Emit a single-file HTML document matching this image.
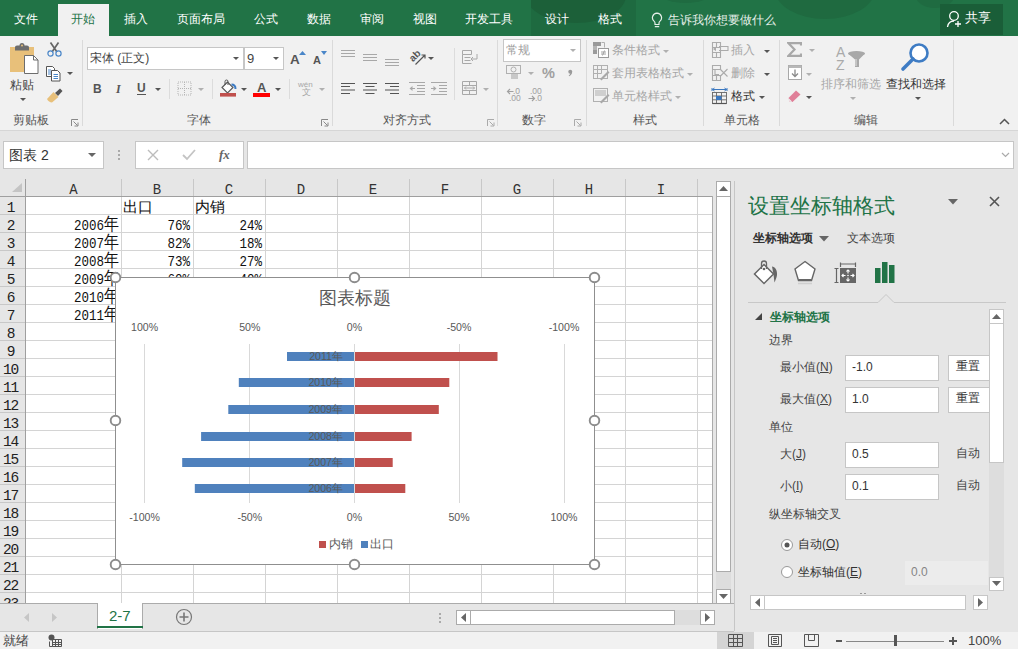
<!DOCTYPE html>
<html><head><meta charset="utf-8">
<style>
*{box-sizing:border-box}
body{margin:0;width:1018px;height:649px;position:relative;overflow:hidden;background:#e6e6e6;font-family:"Liberation Sans",sans-serif;color:#444}
.a{position:absolute}
.t{position:absolute;white-space:nowrap;line-height:1}
#tb{left:0;top:0;width:1018px;height:36px;background:#217346;overflow:hidden}
.tab{position:absolute;top:12px;font-size:12px;color:#fff;line-height:14px;white-space:nowrap}
#rb{left:0;top:36px;width:1018px;height:95px;background:#f1f1f1;border-bottom:1px solid #d6d6d6}
.gl{position:absolute;top:77px;font-size:12px;color:#555;line-height:14px;white-space:nowrap}
.dv{position:absolute;top:4px;width:1px;height:86px;background:#dadada}
.arr{position:absolute;width:0;height:0;border-left:3px solid transparent;border-right:3px solid transparent;border-top:3px solid #555}
.arrg{position:absolute;width:0;height:0;border-left:3px solid transparent;border-right:3px solid transparent;border-top:3px solid #b0b0b0}
.box{position:absolute;background:#fff;border:1px solid #c6c6c6}
.rt{font-size:12px;line-height:14px;color:#a6a6a6;position:absolute;white-space:nowrap}
#grid{left:0;top:179px;width:713px;height:425px;background:#fff;overflow:hidden}
.ch{position:absolute;top:0;height:18px;font-family:"Liberation Mono",monospace;font-size:14px;color:#333;text-align:center;line-height:22px}
.rh{position:absolute;left:0;width:23px;height:18px;font-family:"Liberation Mono",monospace;font-size:14.5px;letter-spacing:-1.3px;color:#222;text-align:center;line-height:22px;text-indent:-2px}
.cell{position:absolute;height:18px;font-family:"Liberation Mono",monospace;font-size:15px;color:#111;line-height:24px;white-space:nowrap}
.d{letter-spacing:0}
.sr{transform:scaleX(.833);transform-origin:100% 50%}
.lab{font-size:10.6px;color:#595959}
</style></head><body>

<!-- title/tabs bar -->
<div id="tb" class="a">
  <div class="a" style="left:775px;top:-40px;width:100px;height:59px;border-radius:50%;background:#1f6a40"></div>
  <div class="a" style="left:658px;top:-20px;width:55px;height:23px;border-radius:50%;background:#1f6b41"></div>
  <div class="a" style="left:915px;top:-20px;width:40px;height:28px;border-radius:50%;background:#1f6b41"></div>
  <div class="a" style="left:531px;top:0;width:105px;height:36px;background:#1e6a40;overflow:hidden"><div class="a" style="left:-5px;top:-32px;width:100px;height:55px;border-radius:50%;background:#1c6039"></div></div>
  <div class="a" style="left:58px;top:4px;width:51px;height:32px;background:#f1f1f1"></div>
  <div class="tab" style="left:14px">文件</div>
  <div class="tab" style="left:71px;color:#217346">开始</div>
  <div class="tab" style="left:124px">插入</div>
  <div class="tab" style="left:177px">页面布局</div>
  <div class="tab" style="left:254px">公式</div>
  <div class="tab" style="left:307px">数据</div>
  <div class="tab" style="left:360px">审阅</div>
  <div class="tab" style="left:413px">视图</div>
  <div class="tab" style="left:465px">开发工具</div>
  <div class="tab" style="left:545px">设计</div>
  <div class="tab" style="left:598px">格式</div>
  <svg class="a" style="left:651px;top:12px" width="12" height="16" viewBox="0 0 12 16"><path d="M6 1.2a4.6 4.6 0 0 0-2.8 8.2c.6.5.8 1.1.8 1.8v1.3h4v-1.3c0-.7.2-1.3.8-1.8A4.6 4.6 0 0 0 6 1.2z" fill="none" stroke="#e6efe9" stroke-width="1.2"/><path d="M3.8 14.6h4.4" stroke="#e6efe9" stroke-width="1.3"/></svg>
  <div class="tab" style="left:668px;top:13px;color:#e6efe9">告诉我你想要做什么</div>
  <div class="a" style="left:940px;top:4px;width:63px;height:31px;background:#1a5e38"></div>
  <svg class="a" style="left:946px;top:10px" width="17" height="18" viewBox="0 0 17 18"><circle cx="8" cy="6" r="4.3" fill="none" stroke="#fff" stroke-width="1.3"/><path d="M1.5 17c.5-3.5 3-6 6.5-6" fill="none" stroke="#fff" stroke-width="1.3"/><path d="M12 11v6M9 14h6" stroke="#fff" stroke-width="1.3"/></svg>
  <div class="tab" style="left:965px;top:11px;font-size:13px">共享</div>
</div>

<!-- ribbon -->
<div id="rb" class="a">
</div>
<!-- clipboard group -->
<svg class="a" style="left:9px;top:42px" width="31" height="33" viewBox="0 0 31 33">
 <rect x="1" y="5" width="24" height="25" fill="#e8c07a"/>
 <path d="M6 5.5c0-1.2.8-2 2-2h2.5a2.5 2.5 0 0 1 5 0H18c1.2 0 2 .8 2 2V8.5H6z" fill="#6d6d6d"/><circle cx="13" cy="3.5" r="1" fill="#e8c07a"/>
 <path d="M15.5 13.5h9l4.5 4.5v13.5h-13.5z" fill="#fff" stroke="#6d6d6d" stroke-width="1"/>
 <path d="M24.5 13.5v4.5h4.5" fill="none" stroke="#6d6d6d" stroke-width="1"/>
</svg>
<div class="t" style="left:10px;top:79px;font-size:12px;color:#444">粘贴</div>
<div class="arr" style="left:20px;top:98px"></div>
<svg class="a" style="left:46px;top:41px" width="17" height="17" viewBox="0 0 17 17">
 <path d="M4.5 1.5l6.5 9.5M12.5 1.5L6 11" stroke="#666" stroke-width="1.7"/>
 <circle cx="4.5" cy="12.5" r="2.6" fill="none" stroke="#4a86c8" stroke-width="1.2"/>
 <circle cx="12.5" cy="12.5" r="2.6" fill="none" stroke="#4a86c8" stroke-width="1.2"/>
</svg>
<svg class="a" style="left:45px;top:65px" width="17" height="17" viewBox="0 0 17 17">
 <path d="M1.5 1.5h6l2 2v8h-8z" fill="#fff" stroke="#555"/>
 <path d="M6.5 5.5h6l2.5 2.5v8h-8.5z" fill="#fff" stroke="#555"/>
 <path d="M3 5h3M3 7h3M3 9h3" stroke="#4a86c8"/>
 <path d="M8.5 9.5h4.5M8.5 11.5h4.5M8.5 13.5h4.5" stroke="#4a86c8"/>
</svg>
<div class="arr" style="left:67px;top:72px"></div>
<svg class="a" style="left:46px;top:88px" width="17" height="15" viewBox="0 0 17 15">
 <path d="M9 5l5-4.5 2.5 2.5-4.5 5z" fill="#555"/>
 <path d="M1 11l6.5-7 5 5-6.5 5.5c-2 0-4-1.5-5-3.5z" fill="#e8c07a"/>
</svg>
<div class="t" style="left:13px;top:114px;font-size:12px;color:#555">剪贴板</div>
<svg class="a" style="left:71px;top:119px" width="8" height="8" viewBox="0 0 8 8"><path d="M.5 7V.5H7" fill="none" stroke="#888"/><path d="M2.5 2.5l4 4M7 3.5V7H3.5" fill="none" stroke="#888"/></svg>
<div class="dv" style="left:82px;top:40px"></div>

<!-- font group -->
<div class="box" style="left:87px;top:47px;width:157px;height:23px"></div>
<div class="t" style="left:90px;top:52px;font-size:12px;color:#444">宋体 (正文)</div>
<div class="arr" style="left:233px;top:57px;border-top-color:#555"></div>
<div class="box" style="left:244px;top:47px;width:40px;height:23px"></div>
<div class="t" style="left:247px;top:52px;font-size:13px;color:#444">9</div>
<div class="arr" style="left:273px;top:57px"></div>
<div class="t" style="left:290px;top:53px;font-size:13.5px;font-weight:bold;color:#555">A</div>
<svg class="a" style="left:299px;top:51px" width="7" height="4"><path d="M0 4L3.5 0 7 4z" fill="#4a86c8"/></svg>
<div class="t" style="left:313px;top:55px;font-size:11px;font-weight:bold;color:#555">A</div>
<svg class="a" style="left:321px;top:51px" width="6" height="4"><path d="M0 0L3 4 6 0z" fill="#4a86c8"/></svg>
<div class="t" style="left:93px;top:83px;font-size:12px;font-weight:bold;color:#555">B</div>
<div class="t" style="left:116px;top:83px;font-size:12px;font-style:italic;font-family:'Liberation Serif',serif;font-weight:bold;color:#555">I</div>
<div class="t" style="left:137px;top:82px;font-size:12px;font-weight:bold;color:#555">U</div>
<div class="a" style="left:137px;top:94px;width:9px;height:1px;background:#555"></div>
<div class="arr" style="left:155px;top:88px"></div>
<div class="a" style="left:169px;top:79px;width:1px;height:20px;background:#dcdcdc"></div>
<svg class="a" style="left:177px;top:81px" width="15" height="15" viewBox="0 0 15 15">
 <path d="M1 1h13v13H1zM7.5 1v13M1 7.5h13" fill="none" stroke="#b5b5b5" stroke-dasharray="1 1"/>
</svg>
<div class="arrg" style="left:198px;top:88px"></div>
<div class="a" style="left:212px;top:79px;width:1px;height:20px;background:#dcdcdc"></div>
<svg class="a" style="left:219px;top:79px" width="18" height="18" viewBox="0 0 18 18">
 <path d="M3 8.5l5.5-5.5 5.5 5.5-5.5 5.5z" fill="#fff" stroke="#555" stroke-width="1.1"/>
 <path d="M6 6V2.5a1.5 1.5 0 0 1 3 0V6" fill="none" stroke="#555" stroke-width="1"/>
 <path d="M12.5 5.5c2.5 0 4 1.5 4 4.5" fill="none" stroke="#3e7cc4" stroke-width="2"/>
 <rect x="1" y="14" width="16" height="3.6" fill="#c0504d"/>
</svg>
<div class="arr" style="left:241px;top:88px"></div>
<div class="t" style="left:257px;top:81px;font-size:13px;font-weight:bold;color:#555">A</div>
<div class="a" style="left:253px;top:93px;width:17px;height:4px;background:#f00"></div>
<div class="arr" style="left:275px;top:88px"></div>
<div class="a" style="left:289px;top:79px;width:1px;height:20px;background:#dcdcdc"></div>
<div class="t" style="left:298px;top:81px;font-size:8px;color:#a8a8a8">wén</div>
<div class="t" style="left:302px;top:88px;font-size:9px;color:#a8a8a8">文</div>
<div class="arrg" style="left:319px;top:88px"></div>
<div class="t" style="left:187px;top:114px;font-size:12px;color:#555">字体</div>
<svg class="a" style="left:321px;top:119px" width="8" height="8" viewBox="0 0 8 8"><path d="M.5 7V.5H7" fill="none" stroke="#888"/><path d="M2.5 2.5l4 4M7 3.5V7H3.5" fill="none" stroke="#888"/></svg>
<div class="dv" style="left:332px;top:40px"></div>

<!-- alignment group -->
<svg class="a" style="left:340px;top:48px" width="62" height="20">
 <g stroke="#a8a8a8"><path d="M1 2.5h14M1 5.5h14M1 8.5h14"/><path d="M23 6.5h14M23 9.5h14M23 12.5h14"/><path d="M45 11.5h14M45 14.5h14M45 17.5h14"/></g>
</svg>
<svg class="a" style="left:407px;top:48px" width="20" height="18" viewBox="0 0 20 18">
 <text x="8" y="11" text-anchor="middle" font-size="10" font-family="Liberation Sans" font-weight="bold" fill="#555" transform="rotate(-45 8 8)">ab</text>
 <path d="M8.5 16.5L18 7M14.5 7H18V10.5" fill="none" stroke="#555" stroke-width="1.2"/>
</svg>
<div class="arr" style="left:428px;top:57px"></div>
<svg class="a" style="left:340px;top:82px" width="108" height="14">
 <g stroke="#555" stroke-width="1.2"><path d="M1 1.5h14M1 4.5h9M1 8h14M1 11.5h9"/><path d="M23 1.5h14M25.5 4.5h9M23 8h14M25.5 11.5h9"/><path d="M45 1.5h14M50 4.5h9M45 8h14M50 11.5h9"/></g>
 <g stroke="#a8a8a8" stroke-width="1.1"><path d="M69 .5h16M77 3.5h8M77 6.5h8M77 9.5h8M69 12.5h16M70 6.5h5"/><path d="M91 .5h16M99 3.5h8M99 6.5h8M99 9.5h8M91 12.5h16M91 6.5h5"/></g><path d="M69.5 6.5l3-2.5v5z" fill="#a8a8a8"/><path d="M96.5 6.5l-3-2.5v5z" fill="#a8a8a8"/>
</svg>
<div class="a" style="left:454px;top:48px;width:1px;height:52px;background:#dcdcdc"></div>
<svg class="a" style="left:461px;top:49px" width="18" height="16" viewBox="0 0 18 16">
 <g fill="none" stroke="#a8a8a8"><path d="M1.5 1.5h9v4h-9zM1.5 5.5v9h9M3.5 8.5h6M3.5 11.5h6"/><path d="M16 5v5h-6M12 8l-2 2 2 2"/></g>
</svg>
<svg class="a" style="left:461px;top:80px" width="17" height="16" viewBox="0 0 17 16">
 <g fill="none" stroke="#a8a8a8"><path d="M1.5 1.5h14v13h-14zM1.5 5.5h14M1.5 10.5h14M8.5 1.5v4M8.5 10.5v4"/><path d="M3.5 8h10M5 6.5L3.5 8 5 9.5M12 6.5L13.5 8 12 9.5"/></g>
</svg>
<div class="arrg" style="left:483px;top:88px"></div>
<div class="t" style="left:383px;top:114px;font-size:12px;color:#555">对齐方式</div>
<svg class="a" style="left:487px;top:119px" width="8" height="8" viewBox="0 0 8 8"><path d="M.5 7V.5H7" fill="none" stroke="#aaa"/><path d="M2.5 2.5l4 4M7 3.5V7H3.5" fill="none" stroke="#aaa"/></svg>
<div class="dv" style="left:497px;top:40px"></div>

<!-- number group -->
<div class="box" style="left:503px;top:39px;width:78px;height:23px"></div>
<div class="t" style="left:506px;top:44px;font-size:12px;color:#a0a0a0">常规</div>
<div class="arrg" style="left:570px;top:49px"></div>
<svg class="a" style="left:505px;top:64px" width="18" height="16" viewBox="0 0 18 16">
 <g fill="none" stroke="#b0b0b0"><rect x="1.5" y="1.5" width="14" height="8"/><circle cx="8.5" cy="5.5" r="2.5"/></g><path d="M6 10h7v5H6z" fill="#c8c8c8"/>
</svg>
<div class="arrg" style="left:528px;top:72px"></div>
<div class="t" style="left:542px;top:66px;font-size:14.5px;font-weight:bold;color:#a0a0a0">%</div>
<svg class="a" style="left:567px;top:69px" width="6" height="8" viewBox="0 0 7 9"><circle cx="3.8" cy="3" r="2.3" fill="#999"/><path d="M6 3c0 2.5-1.5 4.2-3.5 5.2L2 7.5c1.3-.8 2-2 2-3.5z" fill="#999"/></svg>
<div class="t" style="left:513px;top:88px;font-size:8.5px;color:#a0a0a0;line-height:7px">.0</div>
<div class="t" style="left:509px;top:95px;font-size:8.5px;color:#a0a0a0;line-height:7px">.00</div>
<div class="t" style="left:530px;top:88px;font-size:8.5px;color:#a0a0a0;line-height:7px">.00</div>
<div class="t" style="left:535px;top:95px;font-size:8.5px;color:#a0a0a0;line-height:7px">.0</div>
<svg class="a" style="left:506px;top:88px" width="8" height="7"><path d="M7.5 3.5H1.5M4 1L1.5 3.5 4 6" fill="none" stroke="#a0a0a0" stroke-width="1.2"/></svg>
<svg class="a" style="left:528px;top:95px" width="8" height="7"><path d="M.5 3.5h6M4 1l2.5 2.5L4 6" fill="none" stroke="#a0a0a0" stroke-width="1.2"/></svg>

<div class="t" style="left:522px;top:114px;font-size:12px;color:#555">数字</div>
<svg class="a" style="left:574px;top:119px" width="8" height="8" viewBox="0 0 8 8"><path d="M.5 7V.5H7" fill="none" stroke="#aaa"/><path d="M2.5 2.5l4 4M7 3.5V7H3.5" fill="none" stroke="#aaa"/></svg>
<div class="dv" style="left:586px;top:40px"></div>

<!-- styles group -->
<svg class="a" style="left:592px;top:41px" width="18" height="17" viewBox="0 0 18 17">
 <rect x="1" y="1" width="8" height="4" fill="#9a9a9a"/><rect x="1" y="5" width="4" height="4" fill="#b5b5b5"/><rect x="1" y="9" width="4" height="4" fill="#9a9a9a"/>
 <path d="M9.5 1.5h3v5" fill="none" stroke="#b0b0b0"/>
 <rect x="6.5" y="7.5" width="10" height="9" fill="#fff" stroke="#9a9a9a"/><path d="M9 11h5M9 13h5M12.5 9.5l-2 5" stroke="#9a9a9a" stroke-width=".9"/>
</svg>
<div class="t" style="left:612px;top:44px;font-size:12px;color:#a6a6a6">条件格式</div>
<div class="arrg" style="left:663px;top:50px"></div>
<svg class="a" style="left:592px;top:64px" width="18" height="17" viewBox="0 0 18 17">
 <g fill="none" stroke="#b0b0b0"><rect x="1.5" y="1.5" width="14" height="13"/><path d="M1.5 5.5h14M1.5 9.5h8M5.5 1.5v13M9.5 1.5v8"/></g><path d="M8 15l8-8 1.5 1.5-8 8z" fill="#a8a8a8"/>
</svg>
<div class="t" style="left:612px;top:67px;font-size:12px;color:#a6a6a6">套用表格格式</div>
<div class="arrg" style="left:687px;top:73px"></div>
<svg class="a" style="left:592px;top:87px" width="18" height="17" viewBox="0 0 18 17">
 <g fill="none" stroke="#b0b0b0"><rect x="1.5" y="1.5" width="14" height="13"/></g><rect x="3" y="3" width="11" height="6" fill="#cfcfcf"/><path d="M8 15l8-8 1.5 1.5-8 8z" fill="#a8a8a8"/>
</svg>
<div class="t" style="left:612px;top:90px;font-size:12px;color:#a6a6a6">单元格样式</div>
<div class="arrg" style="left:675px;top:96px"></div>
<div class="t" style="left:633px;top:114px;font-size:12px;color:#555">样式</div>
<div class="dv" style="left:703px;top:40px"></div>

<!-- cells group -->
<svg class="a" style="left:711px;top:41px" width="18" height="18" viewBox="0 0 18 18">
 <g fill="none" stroke="#ababab" stroke-width="1.1"><path d="M1.5 1.5h8v15h-8zM1.5 6.5h8M1.5 11.5h8M5.5 11.5v5M5.5 1.5v5"/><path d="M8 5.5h9v4H8"/></g>
 <path d="M2 8l3-2.2v4.4z" fill="#ababab"/>
</svg>
<div class="t" style="left:731px;top:44px;font-size:12px;color:#a6a6a6">插入</div>
<div class="arr" style="left:764px;top:50px"></div>
<svg class="a" style="left:711px;top:64px" width="18" height="18" viewBox="0 0 18 18">
 <g fill="none" stroke="#ababab" stroke-width="1.1"><path d="M1.5 1.5h8v4h-8zM1.5 5.5v11h8v-5h-8M5.5 11.5v5M4 5.5v5h4"/><path d="M9 5l7.5 7.5M16.5 5L9 12.5"/></g>
</svg>
<div class="t" style="left:731px;top:67px;font-size:12px;color:#a6a6a6">删除</div>
<div class="arr" style="left:764px;top:73px"></div>
<svg class="a" style="left:711px;top:87px" width="18" height="18" viewBox="0 0 18 18">
 <path d="M1.5 2.5h14M1 1v3M16 1v3M3.5 1L1.5 2.5 3.5 4M13.5 1l2 1.5-2 1.5" fill="none" stroke="#3b78c0" stroke-width="1"/>
 <g fill="none" stroke="#666" stroke-width=".9"><rect x="1.5" y="5.5" width="14" height="11"/><path d="M1.5 9h14M1.5 12.8h14M5.5 5.5v11M10.5 5.5v11"/></g>
 <rect x="5" y="9" width="5.5" height="4" fill="#3b78c0"/>
 <path d="M1.5 16.5h14" stroke="#555" stroke-width="1.2"/>
</svg>
<div class="t" style="left:731px;top:90px;font-size:12px;color:#333">格式</div>
<div class="arr" style="left:759px;top:96px"></div>
<div class="t" style="left:724px;top:114px;font-size:12px;color:#555">单元格</div>
<div class="dv" style="left:779px;top:40px"></div>

<!-- editing group -->
<svg class="a" style="left:787px;top:42px" width="15" height="15" viewBox="0 0 15 15"><path d="M14 3.5V1.2H1.5l6 6.3-6 6.3H14v-2.3" fill="none" stroke="#a8a8a8" stroke-width="2.2" stroke-linejoin="miter"/></svg>
<div class="arrg" style="left:809px;top:49px"></div>
<svg class="a" style="left:787px;top:64px" width="16" height="17" viewBox="0 0 16 17">
 <rect x="1.5" y="1.5" width="13" height="14" fill="#fff" stroke="#a8a8a8"/><rect x="1.5" y="1.5" width="13" height="2.5" fill="#b8b8b8"/>
 <path d="M8 5.5v7M5 9.5l3 3 3-3" fill="none" stroke="#8a8a8a" stroke-width="1.3"/>
</svg>
<div class="arrg" style="left:806px;top:73px"></div>
<svg class="a" style="left:787px;top:89px" width="15" height="13" viewBox="0 0 15 13">
 <path d="M1 9.5L9 1.5l4.5 4-8 7.5H3z" fill="#e07f98"/><path d="M1 9.5l3.5 3.5" stroke="#f0f0f0" stroke-width="1.2"/>
</svg>
<div class="arr" style="left:806px;top:96px"></div>
<div class="t" style="left:836px;top:45px;font-size:14px;color:#aaa">A</div>
<div class="t" style="left:836px;top:58px;font-size:14px;color:#aaa">Z</div>
<svg class="a" style="left:848px;top:51px" width="18" height="16" viewBox="0 0 18 16"><ellipse cx="8.5" cy="2.5" rx="8.5" ry="2.5" fill="#a8a8a8"/><path d="M0 2.5h17l-6 6v7.5h-4V8.5z" fill="#a8a8a8"/><path d="M8 8v7" stroke="#f1f1f1" stroke-width=".8"/></svg>
<div class="t" style="left:821px;top:78px;font-size:12px;color:#a6a6a6">排序和筛选</div>
<div class="arrg" style="left:850px;top:97px"></div>
<svg class="a" style="left:900px;top:42px" width="31" height="31" viewBox="0 0 31 31">
 <circle cx="19" cy="11" r="8.5" fill="#fff" stroke="#3e7cc4" stroke-width="2.6"/>
 <path d="M13 17L3 27" stroke="#3e7cc4" stroke-width="3.6" stroke-linecap="round"/>
</svg>
<div class="t" style="left:886px;top:78px;font-size:12px;color:#333">查找和选择</div>
<div class="arr" style="left:915px;top:97px"></div>
<div class="t" style="left:854px;top:114px;font-size:12px;color:#555">编辑</div>
<div class="dv" style="left:953px;top:40px"></div>
<svg class="a" style="left:999px;top:118px" width="11" height="7" viewBox="0 0 11 7"><path d="M1 6l4.5-4.5L10 6" fill="none" stroke="#555" stroke-width="1.5"/></svg>


<!-- formula bar area -->
<div class="box" style="left:3px;top:141px;width:101px;height:28px;border-color:#c6c6c6"></div>
<div class="t" style="left:9px;top:148px;font-size:14px;color:#333">图表 2</div>
<div class="arr" style="left:88px;top:153px;border-width:4px 4px 0 4px;border-top-color:#666"></div>
<div class="a" style="left:118px;top:150px;width:2px;height:2px;background:#aaa"></div>
<div class="a" style="left:118px;top:154px;width:2px;height:2px;background:#aaa"></div>
<div class="a" style="left:118px;top:158px;width:2px;height:2px;background:#aaa"></div>
<div class="box" style="left:135px;top:141px;width:109px;height:28px"></div>
<svg class="a" style="left:147px;top:149px" width="12" height="12" viewBox="0 0 12 12"><path d="M1 1l10 10M11 1L1 11" stroke="#bcbcbc" stroke-width="1.4"/></svg>
<svg class="a" style="left:182px;top:149px" width="14" height="12" viewBox="0 0 14 12"><path d="M1 6l4 4 8-9" fill="none" stroke="#c4c4c4" stroke-width="1.8"/></svg>
<div class="t" style="left:219px;top:148px;font-family:'Liberation Serif',serif;font-style:italic;font-weight:bold;font-size:13px;color:#666">fx</div>
<div class="box" style="left:247px;top:141px;width:767px;height:28px"></div>
<svg class="a" style="left:1001px;top:152px" width="9" height="6" viewBox="0 0 9 6"><path d="M1 1l3.5 3.5L8 1" fill="none" stroke="#aaa" stroke-width="1.2"/></svg>

<!-- grid -->
<div id="grid" class="a">
<svg class="a" style="left:0;top:0" width="713" height="425">
<rect x="0" y="0" width="713" height="18" fill="#e6e6e6"/>
<rect x="0" y="0" width="26" height="425" fill="#e6e6e6"/>
<line x1="26" x2="713" y1="35.5" y2="35.5" stroke="#d4d4d4"/>
<line x1="0" x2="26" y1="35.5" y2="35.5" stroke="#c8c8c8"/>
<line x1="26" x2="713" y1="53.5" y2="53.5" stroke="#d4d4d4"/>
<line x1="0" x2="26" y1="53.5" y2="53.5" stroke="#c8c8c8"/>
<line x1="26" x2="713" y1="71.5" y2="71.5" stroke="#d4d4d4"/>
<line x1="0" x2="26" y1="71.5" y2="71.5" stroke="#c8c8c8"/>
<line x1="26" x2="713" y1="89.5" y2="89.5" stroke="#d4d4d4"/>
<line x1="0" x2="26" y1="89.5" y2="89.5" stroke="#c8c8c8"/>
<line x1="26" x2="713" y1="107.5" y2="107.5" stroke="#d4d4d4"/>
<line x1="0" x2="26" y1="107.5" y2="107.5" stroke="#c8c8c8"/>
<line x1="26" x2="713" y1="125.5" y2="125.5" stroke="#d4d4d4"/>
<line x1="0" x2="26" y1="125.5" y2="125.5" stroke="#c8c8c8"/>
<line x1="26" x2="713" y1="143.5" y2="143.5" stroke="#d4d4d4"/>
<line x1="0" x2="26" y1="143.5" y2="143.5" stroke="#c8c8c8"/>
<line x1="26" x2="713" y1="161.5" y2="161.5" stroke="#d4d4d4"/>
<line x1="0" x2="26" y1="161.5" y2="161.5" stroke="#c8c8c8"/>
<line x1="26" x2="713" y1="179.5" y2="179.5" stroke="#d4d4d4"/>
<line x1="0" x2="26" y1="179.5" y2="179.5" stroke="#c8c8c8"/>
<line x1="26" x2="713" y1="197.5" y2="197.5" stroke="#d4d4d4"/>
<line x1="0" x2="26" y1="197.5" y2="197.5" stroke="#c8c8c8"/>
<line x1="26" x2="713" y1="215.5" y2="215.5" stroke="#d4d4d4"/>
<line x1="0" x2="26" y1="215.5" y2="215.5" stroke="#c8c8c8"/>
<line x1="26" x2="713" y1="233.5" y2="233.5" stroke="#d4d4d4"/>
<line x1="0" x2="26" y1="233.5" y2="233.5" stroke="#c8c8c8"/>
<line x1="26" x2="713" y1="251.5" y2="251.5" stroke="#d4d4d4"/>
<line x1="0" x2="26" y1="251.5" y2="251.5" stroke="#c8c8c8"/>
<line x1="26" x2="713" y1="269.5" y2="269.5" stroke="#d4d4d4"/>
<line x1="0" x2="26" y1="269.5" y2="269.5" stroke="#c8c8c8"/>
<line x1="26" x2="713" y1="287.5" y2="287.5" stroke="#d4d4d4"/>
<line x1="0" x2="26" y1="287.5" y2="287.5" stroke="#c8c8c8"/>
<line x1="26" x2="713" y1="305.5" y2="305.5" stroke="#d4d4d4"/>
<line x1="0" x2="26" y1="305.5" y2="305.5" stroke="#c8c8c8"/>
<line x1="26" x2="713" y1="323.5" y2="323.5" stroke="#d4d4d4"/>
<line x1="0" x2="26" y1="323.5" y2="323.5" stroke="#c8c8c8"/>
<line x1="26" x2="713" y1="341.5" y2="341.5" stroke="#d4d4d4"/>
<line x1="0" x2="26" y1="341.5" y2="341.5" stroke="#c8c8c8"/>
<line x1="26" x2="713" y1="359.5" y2="359.5" stroke="#d4d4d4"/>
<line x1="0" x2="26" y1="359.5" y2="359.5" stroke="#c8c8c8"/>
<line x1="26" x2="713" y1="377.5" y2="377.5" stroke="#d4d4d4"/>
<line x1="0" x2="26" y1="377.5" y2="377.5" stroke="#c8c8c8"/>
<line x1="26" x2="713" y1="395.5" y2="395.5" stroke="#d4d4d4"/>
<line x1="0" x2="26" y1="395.5" y2="395.5" stroke="#c8c8c8"/>
<line x1="26" x2="713" y1="413.5" y2="413.5" stroke="#d4d4d4"/>
<line x1="0" x2="26" y1="413.5" y2="413.5" stroke="#c8c8c8"/>
<line x1="26" x2="713" y1="431.5" y2="431.5" stroke="#d4d4d4"/>
<line x1="0" x2="26" y1="431.5" y2="431.5" stroke="#c8c8c8"/>
<line x1="26" x2="713" y1="449.5" y2="449.5" stroke="#d4d4d4"/>
<line x1="0" x2="26" y1="449.5" y2="449.5" stroke="#c8c8c8"/>
<line x1="121.5" x2="121.5" y1="18" y2="425" stroke="#d4d4d4"/>
<line x1="121.5" x2="121.5" y1="0" y2="18" stroke="#c8c8c8"/>
<line x1="193.5" x2="193.5" y1="18" y2="425" stroke="#d4d4d4"/>
<line x1="193.5" x2="193.5" y1="0" y2="18" stroke="#c8c8c8"/>
<line x1="265.5" x2="265.5" y1="18" y2="425" stroke="#d4d4d4"/>
<line x1="265.5" x2="265.5" y1="0" y2="18" stroke="#c8c8c8"/>
<line x1="337.5" x2="337.5" y1="18" y2="425" stroke="#d4d4d4"/>
<line x1="337.5" x2="337.5" y1="0" y2="18" stroke="#c8c8c8"/>
<line x1="409.5" x2="409.5" y1="18" y2="425" stroke="#d4d4d4"/>
<line x1="409.5" x2="409.5" y1="0" y2="18" stroke="#c8c8c8"/>
<line x1="481.5" x2="481.5" y1="18" y2="425" stroke="#d4d4d4"/>
<line x1="481.5" x2="481.5" y1="0" y2="18" stroke="#c8c8c8"/>
<line x1="553.5" x2="553.5" y1="18" y2="425" stroke="#d4d4d4"/>
<line x1="553.5" x2="553.5" y1="0" y2="18" stroke="#c8c8c8"/>
<line x1="625.5" x2="625.5" y1="18" y2="425" stroke="#d4d4d4"/>
<line x1="625.5" x2="625.5" y1="0" y2="18" stroke="#c8c8c8"/>
<line x1="697.5" x2="697.5" y1="18" y2="425" stroke="#d4d4d4"/>
<line x1="697.5" x2="697.5" y1="0" y2="18" stroke="#c8c8c8"/>
<line x1="769.5" x2="769.5" y1="18" y2="425" stroke="#d4d4d4"/>
<line x1="769.5" x2="769.5" y1="0" y2="18" stroke="#c8c8c8"/>
<line x1="0" x2="713" y1="17.5" y2="17.5" stroke="#9f9f9f"/>
<line x1="25.5" x2="25.5" y1="0" y2="425" stroke="#9f9f9f"/>
<path d="M12 13L22 4V13Z" fill="#c4c4c4"/>
<path d="M712.5 17V424.5H0" fill="none" stroke="#ababab"/>
</svg>
<div class="ch" style="left:26px;width:95px">A</div>
<div class="ch" style="left:121px;width:72px">B</div>
<div class="ch" style="left:193px;width:72px">C</div>
<div class="ch" style="left:265px;width:72px">D</div>
<div class="ch" style="left:337px;width:72px">E</div>
<div class="ch" style="left:409px;width:72px">F</div>
<div class="ch" style="left:481px;width:72px">G</div>
<div class="ch" style="left:553px;width:72px">H</div>
<div class="ch" style="left:625px;width:72px">I</div>
<div class="ch" style="left:697px;width:72px">J</div>
<div class="rh" style="top:18px">1</div>
<div class="rh" style="top:36px">2</div>
<div class="rh" style="top:54px">3</div>
<div class="rh" style="top:72px">4</div>
<div class="rh" style="top:90px">5</div>
<div class="rh" style="top:108px">6</div>
<div class="rh" style="top:126px">7</div>
<div class="rh" style="top:144px">8</div>
<div class="rh" style="top:162px">9</div>
<div class="rh" style="top:180px">10</div>
<div class="rh" style="top:198px">11</div>
<div class="rh" style="top:216px">12</div>
<div class="rh" style="top:234px">13</div>
<div class="rh" style="top:252px">14</div>
<div class="rh" style="top:270px">15</div>
<div class="rh" style="top:288px">16</div>
<div class="rh" style="top:306px">17</div>
<div class="rh" style="top:324px">18</div>
<div class="rh" style="top:342px">19</div>
<div class="rh" style="top:360px">20</div>
<div class="rh" style="top:378px">21</div>
<div class="rh" style="top:396px">22</div>
<div class="rh" style="top:414px">23</div>
</div>
<div class="cell" style="left:123px;top:197px">出口</div>
<div class="cell" style="left:195px;top:197px">内销</div>
<div class="cell sr" style="right:899px;top:215px"><span class="d">2006</span><span style="font-size:17.5px;line-height:0">年</span></div>
<div class="cell sr" style="right:828px;top:215px"><span class="d">76%</span></div>
<div class="cell sr" style="right:756px;top:215px"><span class="d">24%</span></div>
<div class="cell sr" style="right:899px;top:233px"><span class="d">2007</span><span style="font-size:17.5px;line-height:0">年</span></div>
<div class="cell sr" style="right:828px;top:233px"><span class="d">82%</span></div>
<div class="cell sr" style="right:756px;top:233px"><span class="d">18%</span></div>
<div class="cell sr" style="right:899px;top:251px"><span class="d">2008</span><span style="font-size:17.5px;line-height:0">年</span></div>
<div class="cell sr" style="right:828px;top:251px"><span class="d">73%</span></div>
<div class="cell sr" style="right:756px;top:251px"><span class="d">27%</span></div>
<div class="cell sr" style="right:899px;top:269px"><span class="d">2009</span><span style="font-size:17.5px;line-height:0">年</span></div>
<div class="cell sr" style="right:828px;top:269px"><span class="d">60%</span></div>
<div class="cell sr" style="right:756px;top:269px"><span class="d">40%</span></div>
<div class="cell sr" style="right:899px;top:287px"><span class="d">2010</span><span style="font-size:17.5px;line-height:0">年</span></div>
<div class="cell sr" style="right:899px;top:305px"><span class="d">2011</span><span style="font-size:17.5px;line-height:0">年</span></div>
<div class="a" style="left:115px;top:277px;width:480px;height:288px;background:#fff;border:1px solid #8f8f8f"></div>
<svg class="a" style="left:0;top:0" width="1018" height="649">
<line x1="144.5" x2="144.5" y1="344" y2="503" stroke="#d9d9d9"/>
<line x1="249.5" x2="249.5" y1="344" y2="503" stroke="#d9d9d9"/>
<line x1="354.5" x2="354.5" y1="344" y2="503" stroke="#d9d9d9"/>
<line x1="459.5" x2="459.5" y1="344" y2="503" stroke="#d9d9d9"/>
<line x1="564.5" x2="564.5" y1="344" y2="503" stroke="#d9d9d9"/>
<rect x="287.0" y="352" width="67.0" height="9" fill="#4f81bd"/>
<rect x="355" y="352" width="142.5" height="9" fill="#c0504d"/>
<rect x="238.8" y="378" width="115.2" height="9" fill="#4f81bd"/>
<rect x="355" y="378" width="94.3" height="9" fill="#c0504d"/>
<rect x="228.3" y="405" width="125.7" height="9" fill="#4f81bd"/>
<rect x="355" y="405" width="83.8" height="9" fill="#c0504d"/>
<rect x="201.1" y="432" width="152.9" height="9" fill="#4f81bd"/>
<rect x="355" y="432" width="56.6" height="9" fill="#c0504d"/>
<rect x="182.2" y="458" width="171.8" height="9" fill="#4f81bd"/>
<rect x="355" y="458" width="37.7" height="9" fill="#c0504d"/>
<rect x="194.8" y="484" width="159.2" height="9" fill="#4f81bd"/>
<rect x="355" y="484" width="50.3" height="9" fill="#c0504d"/>
</svg>
<div class="t" style="left:319px;top:289px;font-size:18px;color:#595959">图表标题</div>
<div class="t lab" style="left:114.6px;top:322px;width:60px;text-align:center">100%</div>
<div class="t lab" style="left:219.8px;top:322px;width:60px;text-align:center">50%</div>
<div class="t lab" style="left:324.5px;top:322px;width:60px;text-align:center">0%</div>
<div class="t lab" style="left:429.0px;top:322px;width:60px;text-align:center">-50%</div>
<div class="t lab" style="left:534.0px;top:322px;width:60px;text-align:center">-100%</div>
<div class="t lab" style="left:114.6px;top:512px;width:60px;text-align:center">-100%</div>
<div class="t lab" style="left:219.8px;top:512px;width:60px;text-align:center">-50%</div>
<div class="t lab" style="left:324.5px;top:512px;width:60px;text-align:center">0%</div>
<div class="t lab" style="left:429.0px;top:512px;width:60px;text-align:center">50%</div>
<div class="t lab" style="left:534.0px;top:512px;width:60px;text-align:center">100%</div>
<div class="t lab" style="right:675px;top:351px">2011年</div>
<div class="t lab" style="right:675px;top:377px">2010年</div>
<div class="t lab" style="right:675px;top:404px">2009年</div>
<div class="t lab" style="right:675px;top:431px">2008年</div>
<div class="t lab" style="right:675px;top:457px">2007年</div>
<div class="t lab" style="right:675px;top:483px">2006年</div>
<div class="a" style="left:319px;top:541px;width:7px;height:7px;background:#c0504d"></div>
<div class="t" style="left:329px;top:538px;font-size:12px;color:#595959">内销</div>
<div class="a" style="left:361px;top:541px;width:7px;height:7px;background:#4f81bd"></div>
<div class="t" style="left:370px;top:538px;font-size:12px;color:#595959">出口</div>
<svg class="a" style="left:0;top:0" width="1018" height="649">
<circle cx="115.5" cy="277.5" r="4.8" fill="#fff" stroke="#8c8c8c" stroke-width="1.9"/>
<circle cx="354.5" cy="277.5" r="4.8" fill="#fff" stroke="#8c8c8c" stroke-width="1.9"/>
<circle cx="594.5" cy="277.5" r="4.8" fill="#fff" stroke="#8c8c8c" stroke-width="1.9"/>
<circle cx="115.5" cy="420.5" r="4.8" fill="#fff" stroke="#8c8c8c" stroke-width="1.9"/>
<circle cx="594.5" cy="420.5" r="4.8" fill="#fff" stroke="#8c8c8c" stroke-width="1.9"/>
<circle cx="115.5" cy="564.5" r="4.8" fill="#fff" stroke="#8c8c8c" stroke-width="1.9"/>
<circle cx="354.5" cy="564.5" r="4.8" fill="#fff" stroke="#8c8c8c" stroke-width="1.9"/>
<circle cx="594.5" cy="564.5" r="4.8" fill="#fff" stroke="#8c8c8c" stroke-width="1.9"/>
</svg>


<!-- vertical scrollbar -->
<div class="a" style="left:716px;top:181px;width:15px;height:422px;background:#dddddd"></div>
<div class="a" style="left:716px;top:181px;width:15px;height:16px;background:#fff;border:1px solid #ababab"></div>
<svg class="a" style="left:719px;top:186px" width="9" height="5"><path d="M0 5L4.5 0 9 5z" fill="#666"/></svg>
<div class="a" style="left:716px;top:196px;width:15px;height:376px;background:#fff;border:1px solid #ababab"></div>
<div class="a" style="left:716px;top:589px;width:15px;height:15px;background:#fff;border:1px solid #ababab"></div>
<svg class="a" style="left:719px;top:594px" width="9" height="5"><path d="M0 0L4.5 5 9 0z" fill="#666"/></svg>
<div class="a" style="left:734px;top:181px;width:1px;height:450px;background:#c6c6c6"></div>

<!-- sheet tab bar -->
<div class="a" style="left:0;top:603px;width:734px;height:29px;background:#e6e6e6;border-top:1px solid #ababab;border-bottom:1px solid #c6c6c6"></div>
<svg class="a" style="left:23px;top:613px" width="6" height="9"><path d="M6 0L1 4.5 6 9z" fill="#c6c6c6"/></svg>
<svg class="a" style="left:52px;top:613px" width="6" height="9"><path d="M0 0L5 4.5 0 9z" fill="#c6c6c6"/></svg>
<div class="a" style="left:97px;top:603px;width:46px;height:26px;background:#fff;border-left:1px solid #ababab;border-right:1px solid #ababab"></div>
<div class="a" style="left:97px;top:626px;width:46px;height:2px;background:#217346"></div>
<div class="t" style="left:109px;top:608px;font-size:15px;color:#217346">2-7</div>
<svg class="a" style="left:175px;top:608px" width="18" height="18" viewBox="0 0 18 18"><circle cx="9" cy="9" r="7.5" fill="none" stroke="#777" stroke-width="1.2"/><path d="M9 4.5v9M4.5 9h9" stroke="#777" stroke-width="1.6"/></svg>
<div class="a" style="left:439px;top:613px;width:2px;height:2px;background:#aaa"></div>
<div class="a" style="left:439px;top:617px;width:2px;height:2px;background:#aaa"></div>
<div class="a" style="left:439px;top:621px;width:2px;height:2px;background:#aaa"></div>
<div class="a" style="left:456px;top:610px;width:259px;height:15px;background:#dddddd"></div>
<div class="a" style="left:456px;top:610px;width:15px;height:15px;background:#fff;border:1px solid #ababab"></div>
<svg class="a" style="left:461px;top:613px" width="5" height="9"><path d="M5 0L0 4.5 5 9z" fill="#666"/></svg>
<div class="a" style="left:470px;top:610px;width:205px;height:15px;background:#fff;border:1px solid #ababab"></div>
<div class="a" style="left:700px;top:610px;width:15px;height:15px;background:#fff;border:1px solid #ababab"></div>
<svg class="a" style="left:705px;top:613px" width="5" height="9"><path d="M0 0L5 4.5 0 9z" fill="#666"/></svg>

<!-- status bar -->
<div class="a" style="left:0;top:632px;width:1018px;height:17px;background:#f1f1f1"></div>
<div class="t" style="left:3px;top:635px;font-size:12.5px;color:#444">就绪</div>
<svg class="a" style="left:48px;top:634px" width="14" height="13" viewBox="0 0 14 13"><circle cx="3.5" cy="3.5" r="3" fill="#555"/><g fill="none" stroke="#555"><path d="M4.5 5.5h9v7h-9zM1.5 7.5v5h3M4.5 8.5h9M4.5 10.5h9M7.5 5.5v7M10.5 5.5v7"/></g></svg>
<div class="a" style="left:717px;top:632px;width:37px;height:17px;background:#d4d4d4"></div>
<svg class="a" style="left:728px;top:634px" width="15" height="13" viewBox="0 0 15 13"><g fill="none" stroke="#555"><path d="M.5 .5h14v12H.5zM.5 4.5h14M.5 8.5h14M5.5 .5v12M9.5 .5v12"/></g></svg>
<svg class="a" style="left:768px;top:634px" width="14" height="13" viewBox="0 0 14 13"><g fill="none" stroke="#555"><path d="M.5 .5h13v12H.5zM3.5 2.5h7v8h-7zM5 4.5h4M5 6.5h4M5 8.5h4"/></g></svg>
<svg class="a" style="left:804px;top:634px" width="15" height="13" viewBox="0 0 15 13"><g fill="none" stroke="#555"><path d="M.5 .5h14v12H.5zM4.5 .5v6h6V.5"/></g></svg>
<div class="a" style="left:836px;top:640px;width:6px;height:2px;background:#555"></div>
<div class="a" style="left:846px;top:641px;width:98px;height:1px;background:#888"></div>
<div class="a" style="left:894px;top:635px;width:3px;height:11px;background:#555"></div>
<div class="a" style="left:949px;top:640px;width:8px;height:2px;background:#555"></div>
<div class="a" style="left:952px;top:637px;width:2px;height:8px;background:#555"></div>
<div class="t" style="left:968px;top:634px;font-size:13px;color:#444">100%</div>

<!-- format pane -->
<div class="t" style="left:748px;top:195px;font-size:21px;color:#217346">设置坐标轴格式</div>
<svg class="a" style="left:948px;top:199px" width="10" height="6"><path d="M0 0L5 5.5 10 0z" fill="#666"/></svg>
<svg class="a" style="left:989px;top:196px" width="11" height="11"><path d="M1 1l9 9M10 1L1 10" stroke="#555" stroke-width="1.6"/></svg>
<div class="t" style="left:753px;top:232px;font-size:12px;font-weight:bold;color:#333">坐标轴选项</div>
<svg class="a" style="left:819px;top:236px" width="10" height="6"><path d="M0 0L5 5.5 10 0z" fill="#666"/></svg>
<div class="t" style="left:847px;top:232px;font-size:12px;color:#444">文本选项</div>
<svg class="a" style="left:750px;top:258px" width="30" height="28" viewBox="0 0 30 28">
 <path d="M14 6.5l9.5 9.5-9.5 9.5L4.5 16z" fill="#fff" stroke="#666" stroke-width="1.5"/>
 <path d="M11.5 11V5.5a2.5 2.5 0 0 1 5 0V11" fill="none" stroke="#666" stroke-width="1.3"/>
 <circle cx="14" cy="11" r="1.3" fill="#666"/>
 <path d="M22 8.5c3 .5 5.5 3.5 5 8.5-.3 2.5-1.5 5-2.5 7.5l-1-8z" fill="#666"/>
</svg>
<svg class="a" style="left:793px;top:259px" width="24" height="28" viewBox="0 0 24 28">
 <path d="M12 2.5L22 10 18.5 21.5H5.5L2 10z" fill="#fff" stroke="#666" stroke-width="1.4"/>
 <path d="M5.5 21h13" stroke="#666" stroke-width="2"/>
 <path d="M5 24.5h14" stroke="#cfcfcf" stroke-width="1.5"/>
</svg>
<svg class="a" style="left:832px;top:260px" width="26" height="25" viewBox="0 0 26 25">
 <path d="M8.5 2.5V7M23.5 2.5V7M8.5 4h15" stroke="#666" stroke-width="1.2"/>
 <path d="M4.5 8v15M2.5 8.5h4M2.5 22.5h4" stroke="#666" stroke-width="1.2"/>
 <rect x="8" y="8" width="16" height="15" fill="#666"/>
 <g stroke="#fff" stroke-width="1.1" fill="none"><path d="M16 10v3.5M16 17.5V21M10 15.5h3.5M18.5 15.5H22"/><path d="M14.5 11.5L16 10l1.5 1.5M14.5 19.5L16 21l1.5-1.5M11.5 14L10 15.5l1.5 1.5M20.5 14L22 15.5 20.5 17"/></g>
 <circle cx="16" cy="15.5" r=".8" fill="#fff"/>
</svg>
<svg class="a" style="left:874px;top:261px" width="22" height="22" viewBox="0 0 22 22">
 <rect x="1" y="7" width="5.5" height="15" fill="#217346"/>
 <rect x="8" y="1" width="5.5" height="21" fill="#217346"/>
 <rect x="15" y="4" width="5.5" height="18" fill="#217346"/>
</svg>
<svg class="a" style="left:740px;top:292px" width="270" height="12"><path d="M8 10.5H138l8-8 8 8H266" fill="none" stroke="#c8c8c8"/></svg>
<svg class="a" style="left:755px;top:313px" width="7" height="7"><path d="M7 0V7H0z" fill="#444"/></svg>
<div class="t" style="left:770px;top:311px;font-size:12px;font-weight:bold;color:#217346">坐标轴选项</div>
<div class="t" style="left:769px;top:334px;font-size:12px;color:#444">边界</div>
<div class="t" style="left:780px;top:361px;font-size:12px;color:#444">最小值(<u>N</u>)</div>
<div class="box" style="left:845px;top:355px;width:94px;height:26px;border-color:#c6c6c6"></div>
<div class="t" style="left:852px;top:361px;font-size:12px;color:#333">-1.0</div>
<div class="box" style="left:948px;top:355px;width:42px;height:26px;border-color:#c6c6c6"></div>
<div class="t" style="left:956px;top:360px;font-size:12px;color:#333">重置</div>
<div class="t" style="left:780px;top:393px;font-size:12px;color:#444">最大值(<u>X</u>)</div>
<div class="box" style="left:845px;top:387px;width:94px;height:26px;border-color:#c6c6c6"></div>
<div class="t" style="left:852px;top:393px;font-size:12px;color:#333">1.0</div>
<div class="box" style="left:948px;top:387px;width:42px;height:26px;border-color:#c6c6c6"></div>
<div class="t" style="left:956px;top:392px;font-size:12px;color:#333">重置</div>
<div class="t" style="left:769px;top:421px;font-size:12px;color:#444">单位</div>
<div class="t" style="left:780px;top:448px;font-size:12px;color:#444">大(<u>J</u>)</div>
<div class="box" style="left:845px;top:442px;width:94px;height:26px;border-color:#c6c6c6"></div>
<div class="t" style="left:852px;top:448px;font-size:12px;color:#333">0.5</div>
<div class="t" style="left:956px;top:447px;font-size:12px;color:#444">自动</div>
<div class="t" style="left:780px;top:480px;font-size:12px;color:#444">小(<u>I</u>)</div>
<div class="box" style="left:845px;top:474px;width:94px;height:26px;border-color:#c6c6c6"></div>
<div class="t" style="left:852px;top:480px;font-size:12px;color:#333">0.1</div>
<div class="t" style="left:956px;top:479px;font-size:12px;color:#444">自动</div>
<div class="t" style="left:769px;top:508px;font-size:12px;color:#444">纵坐标轴交叉</div>
<svg class="a" style="left:780px;top:538px" width="14" height="14"><circle cx="7" cy="7" r="5.5" fill="#fff" stroke="#999"/><circle cx="7" cy="7" r="2.5" fill="#555"/></svg>
<div class="t" style="left:798px;top:538px;font-size:12px;color:#333">自动(<u>O</u>)</div>
<svg class="a" style="left:780px;top:565px" width="14" height="14"><circle cx="7" cy="7" r="5.5" fill="#fff" stroke="#999"/></svg>
<div class="t" style="left:798px;top:566px;font-size:12px;color:#333">坐标轴值(<u>E</u>)</div>
<div class="a" style="left:905px;top:561px;width:83px;height:24px;background:#ececec"></div>
<div class="t" style="left:911px;top:566px;font-size:12px;color:#858585">0.0</div>
<!-- pane scrollbar -->
<div class="a" style="left:860px;top:593px;width:2px;height:1px;background:#999"></div>
<div class="a" style="left:864px;top:593px;width:2px;height:1px;background:#999"></div>
<div class="a" style="left:989px;top:309px;width:15px;height:282px;background:#dddddd"></div>
<div class="a" style="left:989px;top:309px;width:15px;height:15px;background:#fff;border:1px solid #c6c6c6"></div>
<svg class="a" style="left:992px;top:314px" width="9" height="5"><path d="M0 5L4.5 0 9 5z" fill="#666"/></svg>
<div class="a" style="left:989px;top:323px;width:15px;height:140px;background:#fff;border:1px solid #c6c6c6"></div>
<div class="a" style="left:989px;top:577px;width:15px;height:14px;background:#fff;border:1px solid #c6c6c6"></div>
<svg class="a" style="left:992px;top:581px" width="9" height="5"><path d="M0 0L4.5 5 9 0z" fill="#666"/></svg>
<div class="a" style="left:750px;top:595px;width:15px;height:15px;background:#fff;border:1px solid #c6c6c6"></div>
<svg class="a" style="left:755px;top:598px" width="5" height="9"><path d="M5 0L0 4.5 5 9z" fill="#666"/></svg>
<div class="a" style="left:764px;top:595px;width:202px;height:15px;background:#fff;border:1px solid #c6c6c6"></div>
<div class="a" style="left:973px;top:595px;width:15px;height:15px;background:#fff;border:1px solid #c6c6c6"></div>
<svg class="a" style="left:978px;top:598px" width="5" height="9"><path d="M0 0L5 4.5 0 9z" fill="#666"/></svg>

</body></html>
